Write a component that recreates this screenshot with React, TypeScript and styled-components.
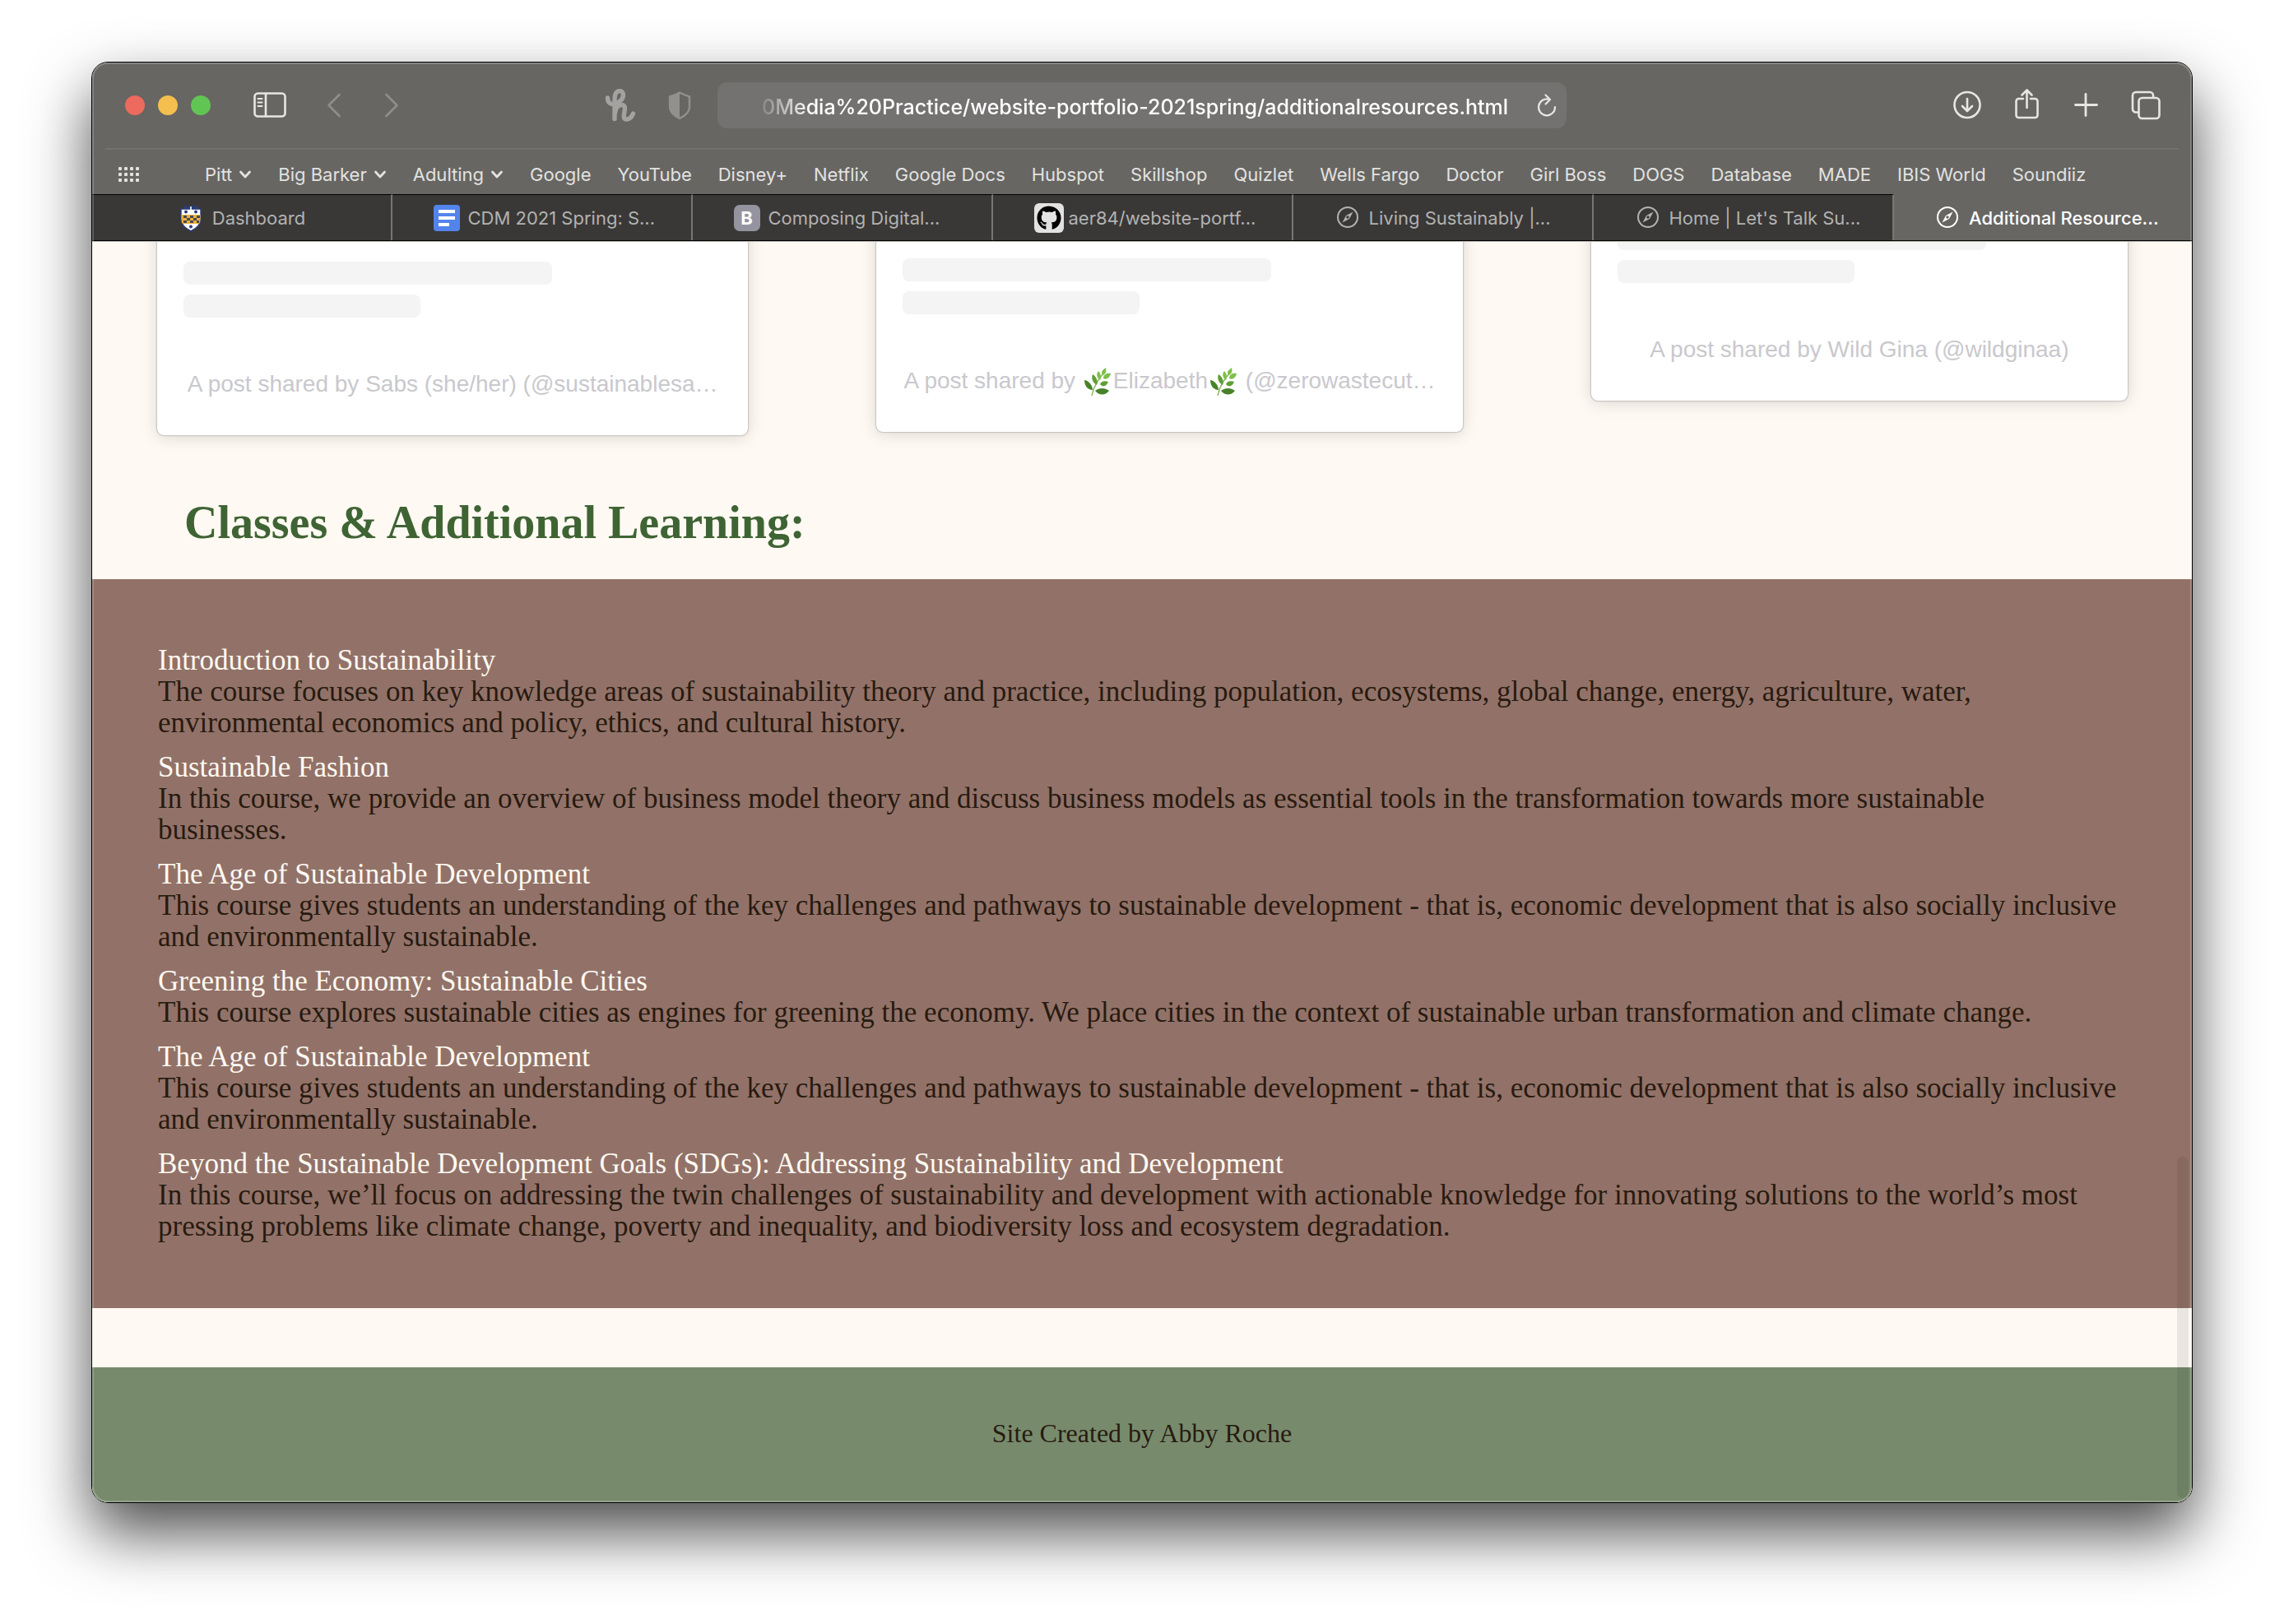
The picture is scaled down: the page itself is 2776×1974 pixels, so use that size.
import React from "react";
import styled, { createGlobalStyle } from "styled-components";
import { FaGithub } from "react-icons/fa";

const uiFont = `Inter, "Liberation Sans", sans-serif`;
const serifFont = `"Liberation Serif", "Times New Roman", serif`;

const GlobalStyle = createGlobalStyle`
  *, *::before, *::after { box-sizing: border-box; }
  body { margin: 0; background: #ffffff; }
  button { padding: 0; border: 0; background: none; color: inherit; font: inherit; cursor: pointer; }
  a { color: inherit; text-decoration: none; }
`;

const Desktop = styled.div`
  min-height: 100vh;
  padding: 75px 111px 147px;
  background: #ffffff;
`;

const BrowserWindow = styled.div`
  position: relative;
  overflow: hidden;
  border: 1px solid #000000;
  border-radius: 20px;
  background: #fef9f2;
`;

const WindowShadow = styled.div`
  border-radius: 20px;
  box-shadow: 0 36px 76px rgba(0, 0, 0, 0.7);
`;

const WindowRim = styled.div`
  position: absolute;
  inset: 0;
  border-radius: 19px;
  box-shadow: inset 0 0 0 2px rgba(255, 255, 255, 0.2);
  pointer-events: none;
`;

const Chrome = styled.header`
  background: #676663;
  color: #e2e2e0;
  font-family: ${uiFont};
`;

const Toolbar = styled.div`
  display: grid;
  grid-template-columns: minmax(0, 1fr) minmax(0, 1032px) minmax(0, 1fr);
  align-items: center;
  height: 104px;
`;

const ToolbarStart = styled.div`
  display: flex;
  align-items: center;
  padding: 0 26px 0 40px;
`;

const ToolbarEnd = styled.div`
  display: flex;
  justify-content: flex-end;
  gap: 32px;
  padding-right: 36px;
`;

const TrafficLights = styled.div`
  display: flex;
  gap: 16px;
  margin-right: 52px;
`;

const TrafficLight = styled.button<{ $color: string }>`
  width: 24px;
  height: 24px;
  border-radius: 50%;
  background: ${(p) => p.$color};
`;

const ToolButton = styled.button`
  display: grid;
  place-items: center;
  width: 40px;
  height: 40px;
  svg { display: block; }
`;

const NavButtons = styled.div`
  display: flex;
  gap: 30px;
  margin-left: 38px;
`;

const Extensions = styled.div`
  display: flex;
  gap: 32px;
  margin-left: auto;
`;

const AddressBar = styled.div`
  display: flex;
  align-items: center;
  height: 56px;
  padding: 0 4px 0 54px;
  border-radius: 12px;
  background: #737270;
`;

const AddressInput = styled.input`
  flex: 1;
  min-width: 0;
  height: 40px;
  padding: 3px 0 0;
  border: 0;
  outline: 0;
  background: none;
  color: #ffffff;
  font: 500 25px/36px ${uiFont};
  mask-image: linear-gradient(to right, rgba(0, 0, 0, 0.15), #000000 60px);
`;

const Favorites = styled.nav`
  display: flex;
  align-items: center;
  gap: 32px;
  height: 56px;
  margin: 0 16px;
  padding: 5px 16px 0;
  border-top: 2px solid #737270;
  font-size: 22px;
  line-height: 28px;
  white-space: nowrap;
`;

const FavoritesGrid = styled.button`
  display: grid;
  margin-right: 47px;
`;

const Folder = styled.button`
  display: flex;
  align-items: center;
  gap: 8px;
`;

const TabStrip = styled.div`
  display: grid;
  grid-template-columns: repeat(6, minmax(0, 365fr)) minmax(0, 362fr);
  height: 57px;
  border-bottom: 1px solid #000000;
`;

const Tab = styled.button<{ $active?: boolean }>`
  display: flex;
  align-items: center;
  justify-content: center;
  gap: 10px;
  min-width: 0;
  border-top: 1px solid ${(p) => (p.$active ? "transparent" : "#000000")};
  border-right: ${(p) => (p.$active ? "0" : "2px solid #777674")};
  background: ${(p) => (p.$active ? "transparent" : "#393837")};
  color: ${(p) => (p.$active ? "#ffffff" : "#b3b2b1")};
  font-size: 22px;
  line-height: 28px;
  font-weight: ${(p) => (p.$active ? 500 : 400)};
`;

const TabIcon = styled.span`
  display: grid;
  flex: none;
  place-items: center;
  width: 32px;
  height: 36px;
`;

const TabLabel = styled.span<{ $cut?: boolean }>`
  width: ${(p) => (p.$cut ? "222px" : "auto")};
  text-align: left;
  white-space: nowrap;
`;

const LetterTile = styled.span`
  display: grid;
  place-items: center;
  width: 32px;
  height: 32px;
  border-radius: 7px;
  background: #9494a0;
  color: #ffffff;
  font-size: 22px;
  font-weight: 700;
`;

const GithubTile = styled.span`
  display: grid;
  place-items: center;
  width: 36px;
  height: 36px;
  border-radius: 6px;
  background: #e2e2e2;
  color: #000000;
`;

const Page = styled.main`
  overflow: hidden;
  border-top: 1px solid #b9b6b1;
  background: #fef9f2;
  color: #281a10;
  font-family: ${serifFont};
`;

const Embeds = styled.section`
  display: grid;
  grid-template-columns: 718fr 712fr 652fr;
  align-items: start;
  gap: 156px;
  margin-top: -78px;
  padding: 0 78px 0 79px;
`;

const PostCard = styled.article<{ $lead: number }>`
  display: flex;
  flex-direction: column;
  gap: 12px;
  min-width: 0;
  padding: ${(p) => p.$lead}px 32px 44px;
  border-radius: 8px;
  background: #ffffff;
  box-shadow: 0 0 2px rgba(0, 0, 0, 0.5), 0 2px 20px rgba(0, 0, 0, 0.15);
`;

const Placeholder = styled.span<{ $width: number }>`
  width: ${(p) => p.$width}px;
  height: 28px;
  border-radius: 8px;
  background: #f4f4f4;
`;

const PostCaption = styled.a`
  height: 36px;
  margin-top: 51px;
  color: #c9c8cd;
  font: 28px/36px "Liberation Sans", Arial, sans-serif;
  text-align: center;
  white-space: nowrap;
  svg {
    margin: -6px 2px;
    vertical-align: -4px;
  }
`;

const SectionTitle = styled.h2`
  margin: 74px 112px 37px;
  color: #3f6434;
  font-size: 56px;
  font-weight: 700;
  line-height: 64px;
`;

const CourseList = styled.section`
  display: flex;
  flex-direction: column;
  gap: 16px;
  padding: 80px;
  background: #927268;
  font-size: 35px;
  line-height: 38px;
`;

const CourseTitle = styled.a`
  display: block;
  color: #fef9f2;
`;

const CourseText = styled.p`
  margin: 0;
  white-space: pre-line;
`;

const PageFooter = styled.footer`
  margin-top: 72px;
  padding: 62px 0 66px;
  background: #778b6c;
  font-size: 32px;
  line-height: 36px;
  text-align: center;
`;

const ScrollThumb = styled.div`
  position: absolute;
  right: 4px;
  bottom: 5px;
  width: 14px;
  height: 415px;
  border-radius: 7px;
  background: rgba(0, 0, 0, 0.08);
`;

const SidebarIcon = () => (
  <svg width="40" height="32" viewBox="0 0 40 32" fill="none" stroke="#e6e6e4" strokeWidth="2.6">
    <rect x="1.5" y="1.5" width="37" height="28" rx="4" />
    <path d="M15 1.5v28" />
    <path d="M5.5 8h5M5.5 12.5h5M5.5 17h5" strokeWidth="2" strokeLinecap="round" />
  </svg>
);

const ArrowIcon = ({ back }: { back?: boolean }) => (
  <svg width="18" height="30" viewBox="0 0 18 30" fill="none" stroke="#8f8e8c" strokeWidth="2.6" strokeLinecap="round" strokeLinejoin="round">
    <path d={back ? "M15.500 2L2.500 15l13 13" : "M2.500 2l13 13-13 13"} />
  </svg>
);

const HoneyIcon = () => (
  <svg width="38" height="40" viewBox="0 0 38 40" fill="none" stroke="#a3a2a0" strokeWidth="5.400" strokeLinecap="round" strokeLinejoin="round">
    <path d="M3.500 11c0 6 4 8.500 9 7c6-1.500 10-6 10-10.500c0-3.500-2-5-4.500-5c-4.500 0-6 5-6 11v23" />
    <path d="M12.500 29c1-6 4-9.500 8-9.500c4 0 4.500 3 3.500 8c-1 6-1.500 9.500 2.500 9.500c4 0 6.500-3 8-7" />
  </svg>
);

const ShieldIcon = () => (
  <svg width="30" height="36" viewBox="0 0 30 36">
    <path d="M15 2.500C11.500 4.500 7 6 3 7.300V20c0 6 5 10.500 12 14c7-3.500 12-8 12-14V7.300C23 6 18.500 4.500 15 2.500z" fill="none" stroke="#92918f" strokeWidth="2.400" />
    <path d="M15 2.500C11.500 4.500 7 6 3 7.300V20c0 6 5 10.500 12 14z" fill="#92918f" />
  </svg>
);

const ReloadIcon = () => (
  <svg width="24" height="30" viewBox="0 0 24 30" fill="none" stroke="#e6e6e4" strokeWidth="2.200" strokeLinecap="round" strokeLinejoin="round">
    <path d="M15 7.800A10 10 0 1 0 22 17" />
    <path d="M10.500 2.500l5.500 5.500l-5.500 5.500" />
  </svg>
);

const DownloadIcon = () => (
  <svg width="36" height="36" viewBox="0 0 36 36" fill="none" stroke="#e6e6e4" strokeWidth="2.600" strokeLinecap="round" strokeLinejoin="round">
    <circle cx="17" cy="17.500" r="15.500" />
    <path d="M17 10v14.500M11 19l6 6l6-6" />
  </svg>
);

const ShareIcon = () => (
  <svg width="32" height="40" viewBox="0 0 32 40" fill="none" stroke="#e6e6e4" strokeWidth="2.600" strokeLinecap="round" strokeLinejoin="round">
    <path d="M11 12H5.500a3 3 0 0 0-3 3v17a3 3 0 0 0 3 3h20a3 3 0 0 0 3-3V15a3 3 0 0 0-3-3H20" />
    <path d="M15.500 23V1.500M9.500 7.500l6-6l6 6" />
  </svg>
);

const PlusIcon = () => (
  <svg width="30" height="30" viewBox="0 0 30 30" fill="none" stroke="#e6e6e4" strokeWidth="2.800" strokeLinecap="round">
    <path d="M14 1.500v26M1.500 14.500h26" />
  </svg>
);

const TabsIcon = () => (
  <svg width="36" height="36" viewBox="0 0 36 36" fill="none" stroke="#e6e6e4" strokeWidth="2.600" strokeLinejoin="round">
    <path d="M9 26.500H6a4 4 0 0 1-4-4V6a4 4 0 0 1 4-4h17a4 4 0 0 1 4 4v3" />
    <rect x="9.500" y="9" width="25" height="25" rx="4" />
  </svg>
);

const GridIcon = () => (
  <svg width="26" height="20" viewBox="0 0 26 20" fill="#e2e2e0">
    {[0, 7, 14, 21].map((x) => [1, 8, 15].map((y) => <rect key={`${x}-${y}`} x={x} y={y} width="4" height="4" rx="1" />))}
  </svg>
);

const ChevronIcon = () => (
  <svg width="16" height="12" viewBox="0 0 16 12" fill="none" stroke="#e2e2e0" strokeWidth="2.800" strokeLinecap="round" strokeLinejoin="round">
    <path d="M2.500 3L8 9l5.500-6" />
  </svg>
);

const PittIcon = () => (
  <svg width="26" height="34" viewBox="0 0 26 34">
    <path d="M5 6V1l3 3l2-3l3 3l3-3l2 3l3-3v5z" fill="#2b3c7c" />
    <path d="M1 6h24v12c0 8-6 12-12 15C7 30 1 26 1 18z" fill="#ffffff" stroke="#2b3c7c" strokeWidth="1.400" />
    <path d="M1.500 13h23v6c0 2-.5 3.500-1.300 5H2.800C2 22.500 1.500 21 1.500 19z" fill="#e9b13c" />
    <path d="M4 14h4v3H4zM12 14h4v3h-4zM20 14h4v3h-4zM8 17h4v3H8zM16 17h4v3h-4zM4 20h4v3H4zM12 20h4v3h-4zM20 20h3v3h-3z" fill="#4a4a52" />
    <circle cx="7" cy="9.500" r="2" fill="#2b3c7c" />
    <circle cx="19" cy="9.500" r="2" fill="#2b3c7c" />
    <circle cx="13" cy="27.500" r="2" fill="#2b3c7c" />
    <path d="M12.200 3h1.600v6h-1.600z" fill="#ffffff" />
  </svg>
);

const DocsIcon = () => (
  <svg width="32" height="32" viewBox="0 0 32 32">
    <rect width="32" height="32" rx="4" fill="#5384ec" />
    <path d="M6 6h20v4H6zM6 14h20v4H6zM6 22h13v4H6z" fill="#ffffff" />
  </svg>
);

const CompassIcon = () => (
  <svg width="28" height="28" viewBox="0 0 28 28" fill="none" stroke="currentColor" strokeWidth="2">
    <circle cx="14" cy="13" r="12" />
    <path fillRule="evenodd" d="M20.500 6.500L16 15l-8.500 4.500L12 11zM14 11.300a1.700 1.700 0 1 0 0 3.400a1.700 1.700 0 0 0 0-3.400z" fill="currentColor" stroke="none" />
  </svg>
);

const HerbIcon = () => (
  <svg width="34" height="36" viewBox="0 0 34 36" role="img" aria-label="herb">
    <path d="M10 35C12 24 18 14 27 5" fill="none" stroke="#7fae4c" strokeWidth="1.300" />
    <g fill="#7fbf4a">
      <path d="M27 1c-5 3-6 6-4 9c4-1 5-5 4-9z" />
      <path d="M33 8c-6-1-9 2-9 6c4 2 8-1 9-6z" />
      <path d="M18 5c-3 4-2 8 2 11c2-3 1-8-2-11z" />
    </g>
    <g fill="#5f9f36">
      <path d="M30 18c-5-2-9 0-10 3c3 4 8 3 10-3z" />
      <path d="M11 9c-2 5 0 10 5 13c2-4 0-10-5-13z" />
    </g>
    <g fill="#47822a">
      <path d="M1 16c0 7 4 12 10 12c0-5-4-11-10-12z" />
      <path d="M31 29c-5-4-12-4-17 0c5 6 12 6 17 0z" />
    </g>
  </svg>
);

const folders = ["Pitt", "Big Barker", "Adulting"];

const favorites = [
  "Google", "YouTube", "Disney+", "Netflix", "Google Docs", "Hubspot", "Skillshop", "Quizlet",
  "Wells Fargo", "Doctor", "Girl Boss", "DOGS", "Database", "MADE", "IBIS World", "Soundiiz",
];

const tabs: { label: string; icon: React.ReactNode; cut?: boolean; active?: boolean }[] = [
  { label: "Dashboard", icon: <PittIcon /> },
  { label: "CDM 2021 Spring: S...", icon: <DocsIcon />, cut: true },
  { label: "Composing Digital...", icon: <LetterTile>B</LetterTile>, cut: true },
  { label: "aer84/website-portf...", icon: <GithubTile><FaGithub size={30} /></GithubTile>, cut: true },
  { label: "Living Sustainably |...", icon: <CompassIcon />, cut: true },
  { label: "Home | Let's Talk Su...", icon: <CompassIcon />, cut: true },
  { label: "Additional Resource...", icon: <CompassIcon />, cut: true, active: true },
];

const posts: { lead: number; caption: React.ReactNode }[] = [
  { lead: 102, caption: "A post shared by Sabs (she/her) (@sustainablesa…" },
  { lead: 98, caption: <>A post shared by <HerbIcon />Elizabeth<HerbIcon /> (@zerowastecut…</> },
  { lead: 60, caption: "A post shared by Wild Gina (@wildginaa)" },
];

const ageOfDevelopment = {
  title: "The Age of Sustainable Development",
  text: "This course gives students an understanding of the key challenges and pathways to sustainable development - that is, economic development that is also socially inclusive and environmentally sustainable.",
};

const courses = [
  {
    title: "Introduction to Sustainability",
    text: "The course focuses on key knowledge areas of sustainability theory and practice, including population, ecosystems, global change, energy, agriculture, water, environmental economics and policy, ethics, and cultural history.",
  },
  {
    title: "Sustainable Fashion",
    text: "In this course, we provide an overview of business model theory and discuss business models as essential tools in the transformation towards more sustainable\nbusinesses.",
  },
  ageOfDevelopment,
  {
    title: "Greening the Economy: Sustainable Cities",
    text: "This course explores sustainable cities as engines for greening the economy. We place cities in the context of sustainable urban transformation and climate change.",
  },
  ageOfDevelopment,
  {
    title: "Beyond the Sustainable Development Goals (SDGs): Addressing Sustainability and Development",
    text: "In this course, we’ll focus on addressing the twin challenges of sustainability and development with actionable knowledge for innovating solutions to the world’s most pressing problems like climate change, poverty and inequality, and biodiversity loss and ecosystem degradation.",
  },
];

export default function App() {
  return (
    <Desktop>
      <GlobalStyle />
      <WindowShadow>
        <BrowserWindow>
          <Chrome>
            <Toolbar>
              <ToolbarStart>
                <TrafficLights>
                  <TrafficLight $color="#ec6a5e" aria-label="Close" />
                  <TrafficLight $color="#f4bf4f" aria-label="Minimize" />
                  <TrafficLight $color="#61c554" aria-label="Zoom" />
                </TrafficLights>
                <ToolButton aria-label="Sidebar"><SidebarIcon /></ToolButton>
                <NavButtons>
                  <ToolButton aria-label="Back"><ArrowIcon back /></ToolButton>
                  <ToolButton aria-label="Forward"><ArrowIcon /></ToolButton>
                </NavButtons>
                <Extensions>
                  <ToolButton aria-label="Honey"><HoneyIcon /></ToolButton>
                  <ToolButton aria-label="Privacy report"><ShieldIcon /></ToolButton>
                </Extensions>
              </ToolbarStart>
              <AddressBar>
                <AddressInput
                  aria-label="Address"
                  defaultValue="0Media%20Practice/website-portfolio-2021spring/additionalresources.html"
                />
                <ToolButton aria-label="Reload"><ReloadIcon /></ToolButton>
              </AddressBar>
              <ToolbarEnd>
                <ToolButton aria-label="Downloads"><DownloadIcon /></ToolButton>
                <ToolButton aria-label="Share"><ShareIcon /></ToolButton>
                <ToolButton aria-label="New tab"><PlusIcon /></ToolButton>
                <ToolButton aria-label="Tab overview"><TabsIcon /></ToolButton>
              </ToolbarEnd>
            </Toolbar>
            <Favorites>
              <FavoritesGrid aria-label="Favorites"><GridIcon /></FavoritesGrid>
              {folders.map((name) => (
                <Folder key={name}>{name}<ChevronIcon /></Folder>
              ))}
              {favorites.map((name) => (
                <a key={name} href="#">{name}</a>
              ))}
            </Favorites>
            <TabStrip>
              {tabs.map((tab) => (
                <Tab key={tab.label} $active={tab.active}>
                  <TabIcon>{tab.icon}</TabIcon>
                  <TabLabel $cut={tab.cut}>{tab.label}</TabLabel>
                </Tab>
              ))}
            </TabStrip>
          </Chrome>
          <Page>
            <Embeds>
              {posts.map((post) => (
                <PostCard key={post.lead} $lead={post.lead}>
                  <Placeholder $width={448} />
                  <Placeholder $width={288} />
                  <PostCaption href="#">{post.caption}</PostCaption>
                </PostCard>
              ))}
            </Embeds>
            <SectionTitle>Classes &amp; Additional Learning:</SectionTitle>
            <CourseList>
              {courses.map((course, i) => (
                <div key={i}>
                  <CourseTitle href="#">{course.title}</CourseTitle>
                  <CourseText>{course.text}</CourseText>
                </div>
              ))}
            </CourseList>
            <PageFooter>Site Created by Abby Roche</PageFooter>
          </Page>
          <ScrollThumb />
          <WindowRim />
        </BrowserWindow>
      </WindowShadow>
    </Desktop>
  );
}
